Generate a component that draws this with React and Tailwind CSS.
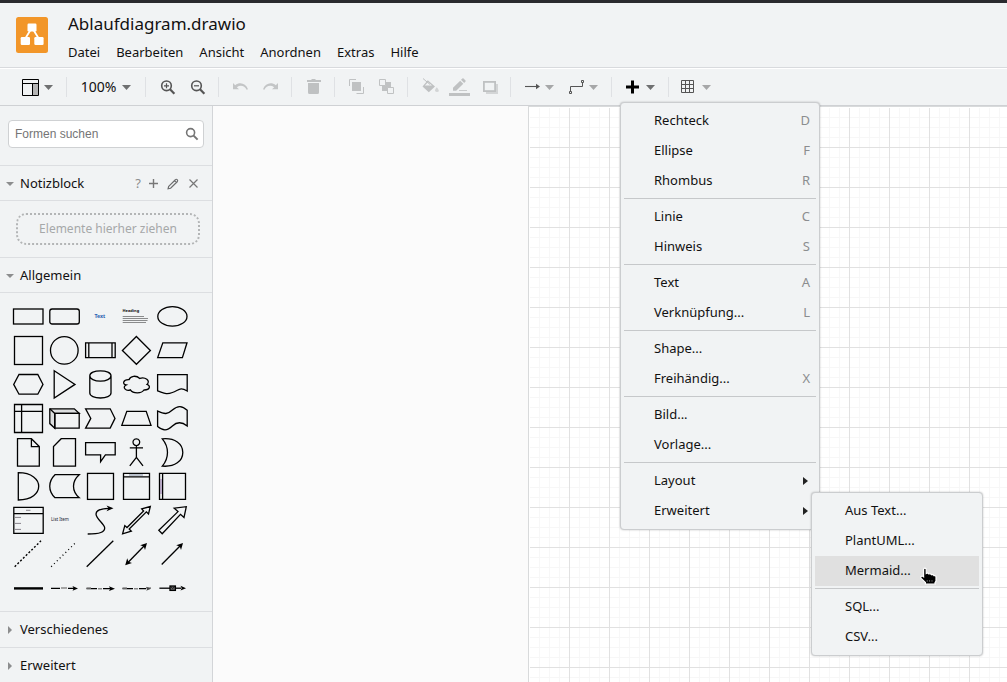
import React from 'react';

const menus = ['Datei', 'Bearbeiten', 'Ansicht', 'Anordnen', 'Extras', 'Hilfe'];

const insertMenu = [
    [
        { label: 'Rechteck', shortcut: 'D' },
        { label: 'Ellipse', shortcut: 'F' },
        { label: 'Rhombus', shortcut: 'R' },
    ],
    [
        { label: 'Linie', shortcut: 'C' },
        { label: 'Hinweis', shortcut: 'S' },
    ],
    [
        { label: 'Text', shortcut: 'A' },
        { label: 'Verknüpfung...', shortcut: 'L' },
    ],
    [
        { label: 'Shape...' },
        { label: 'Freihändig...', shortcut: 'X' },
    ],
    [
        { label: 'Bild...' },
        { label: 'Vorlage...' },
    ],
    [
        { label: 'Layout', submenu: true },
        { label: 'Erweitert', submenu: true, open: true },
    ],
];

const advancedMenu = [
    [
        { label: 'Aus Text...' },
        { label: 'PlantUML...' },
        { label: 'Mermaid...', active: true },
    ],
    [
        { label: 'SQL...' },
        { label: 'CSV...' },
    ],
];

// Sidebar shapes, each drawn in a 36x34 cell
const shapes = [
    { name: 'Rechteck', art: <rect x="3.5" y="10" width="29.5" height="15" /> },
    { name: 'Abgerundetes Rechteck', art: <rect x="3.8" y="10" width="29.5" height="15" rx="2.3" /> },
    { name: 'Text', art: <text x="12.4" y="19" fontSize="5.2" fontWeight="bold" fill="#2a5db0" stroke="none">Text</text> },
    {
        name: 'Textfeld',
        art: (
            <>
                <text x="4.5" y="13.2" fontSize="4" fontWeight="bold" fill="#111" stroke="none">Heading</text>
                <path d="M4.7 17.5H26M4.7 19.5H30M4.7 21.5H29.5M4.7 23.5H28" strokeWidth="0.6" stroke="#444" />
            </>
        ),
    },
    { name: 'Ellipse', art: <ellipse cx="18.4" cy="17.4" rx="14.6" ry="9.8" /> },
    { name: 'Quadrat', art: <rect x="4.5" y="3.5" width="28" height="28" /> },
    { name: 'Kreis', art: <circle cx="18.3" cy="17.4" r="13.8" /> },
    { name: 'Prozess', art: <path d="M3.6 9.8H33.2V24.6H3.6ZM6.8 9.8V24.6M30 9.8V24.6" /> },
    { name: 'Rhombus', art: <path d="M18.4 3.5L32.4 17.5L18.4 31.3L4.4 17.5Z" /> },
    { name: 'Parallelogramm', art: <path d="M8.8 9.8H33L28.4 24.6H3.7Z" /> },
    { name: 'Sechseck', art: <path d="M9 7.5H27.8L33 17.4L27.8 27.2H9L3.7 17.4Z" /> },
    { name: 'Dreieck', art: <path d="M8.2 3.8L29 17.4L8.2 31Z" /> },
    { name: 'Zylinder', art: <path d="M7.8 8.8C7.8 5.8 12.5 3.8 18.4 3.8S29 5.8 29 8.8V26C29 29 24.3 31 18.4 31S7.8 29 7.8 26ZM7.8 8.8C7.8 11.8 12.5 14.2 18.4 14.2S29 11.8 29 8.8" /> },
    { name: 'Wolke', art: <path d="M11 12.7C5 12.4 4 17.2 8.2 18C3.6 20 8 24.6 12.4 22.8C15 26.8 23.5 26.8 26 23C32 23.2 33 18.8 29 17.4C33 13.6 27 9.6 21.8 11.4C18.3 8.2 12.3 8.6 11 12.7Z" /> },
    { name: 'Dokument', art: <path d="M3.6 7.6H33.2V24C25.8 19.6 25.2 23 18.4 25.5C12 28 10 26 3.6 23.8Z" /> },
    { name: 'Interner Speicher', art: <path d="M4.5 3.5H32.5V31.5H4.5ZM4.5 10.4H32.5M11.6 3.5V31.5" /> },
    {
        name: 'Würfel',
        art: (
            <>
                <path d="M3.8 7.8H28.3L33.2 12.4H8.8V27.2L3.8 22.6Z" fill="#dcdedf" />
                <path d="M8.8 12.4H33.2V27.2H8.8ZM8.8 12.4L3.8 7.8" />
            </>
        ),
    },
    { name: 'Schritt', art: <path d="M3.6 7.8H28.2L33 17.4L28.2 27.1H3.6L8.8 17.4Z" /> },
    { name: 'Trapez', art: <path d="M8.8 10.3H28.2L33 24.4H3.8Z" /> },
    { name: 'Band', art: <path d="M3.6 10C11 13.6 13.5 13.4 18.4 9C24 4.2 28 4.6 33.2 9.3V25C28 20.8 23 20.6 18.4 25C13 30 9 30 3.6 25.5Z" /> },
    { name: 'Notiz', art: <path d="M7.5 3.7H21.4L29.3 11.6V31.2H7.5ZM21.4 3.7V11.6H29.3" /> },
    { name: 'Karte', art: <path d="M15.2 3.7H29.5V31.2H7.5V11.5Z" /> },
    { name: 'Sprechblase', art: <path d="M3.6 7.7H33.2V19.8H23.4L18.6 26.6V19.8H3.6Z" /> },
    { name: 'Akteur', art: <path d="M18.4 3.8A3.4 3.4 0 1 1 18.3 3.8ZM18.4 10.6V22.4M11.8 12.8H25M18.4 22.4L11.8 30.8M18.4 22.4L25 30.8" /> },
    { name: 'Oder', art: <path d="M8.3 3.8C21 2.6 28.8 9 28.8 17.4S21 32.2 8.3 31.1C15.2 23 15.2 12 8.3 3.8Z" /> },
    { name: 'Und', art: <path d="M8.3 3.7C35.5 3.7 35.5 31 8.3 31Z" /> },
    { name: 'Datenspeicher', art: <path d="M9 5.7H33.2C25.6 12.4 25.6 22 33.2 28.7H9C2 22 2 12.4 9 5.7Z" /> },
    { name: 'Container', art: <rect x="5.5" y="4.4" width="26" height="26" /> },
    {
        name: 'Vertikaler Container',
        art: (
            <>
                <path d="M5.5 4.4H31.5V30.4H5.5ZM5.5 7.8H31.5" />
                <path d="M11 6H25" strokeWidth="0.9" stroke="#76849a" />
            </>
        ),
    },
    {
        name: 'Horizontaler Container',
        art: (
            <>
                <path d="M5.5 4.4H31.5V30.4H5.5ZM8.6 4.4V30.4" />
                <path d="M7 10V25" strokeWidth="0.9" stroke="#8a67a5" />
            </>
        ),
    },
    {
        name: 'Liste',
        art: (
            <>
                <path d="M3.8 4.4H33.2V30.4H3.8ZM3.8 10.6H33.2" />
                <path d="M16 7.3H20.5M5 14.4H11M5 20.4H11M5 26.4H11" strokeWidth="0.8" stroke="#6b6470" />
            </>
        ),
    },
    { name: 'Listenelement', art: <text x="5" y="18" fontSize="4.4" fill="#223" stroke="none">List Item</text> },
    {
        name: 'Kurve',
        art: (
            <>
                <path d="M5.7 31C18 31 22.7 29 22.7 25C22.7 21 14 16 14 11C14 7 19 5.5 27 5.3" />
                <path d="M31.5 5.3L24.5 2.5L26.5 5.3L24.5 8.3Z" fill="black" stroke="none" />
            </>
        ),
    },
    { name: 'Doppelpfeil', art: <path d="M32.3 3.5L30.5 11L28.4 8.9L11.2 26L13.3 28.2L4.6 30.8L6.8 22.6L9 24.5L25.6 8L23.7 5.8Z" /> },
    { name: 'Pfeil', art: <path d="M32.3 3.7L30 14.5L26.5 11.3L8.2 30.8L4.8 27.3L24 8.6L20.2 5.2Z" /> },
    { name: 'Gestrichelte Linie', art: <path d="M4.7 29.7L31 3.8" strokeWidth="1.4" strokeDasharray="2 1.9" /> },
    { name: 'Gepunktete Linie', art: <path d="M5.2 29.7L30.5 4.8" strokeDasharray="1 3" /> },
    { name: 'Linie', art: <path d="M4.7 29.7L31.3 3.8" /> },
    {
        name: 'Bidirektionaler Verbinder',
        art: (
            <>
                <path d="M9 26.5L27 8" />
                <path d="M29 6L27 13L25.8 9.5L22.2 8.3ZM7.2 28.2L9.2 21.2L10.5 24.8L14 26Z" fill="black" stroke="none" />
            </>
        ),
    },
    {
        name: 'Gerichteter Verbinder',
        art: (
            <>
                <path d="M7.7 27.5L27 8" />
                <path d="M29 6L27 13L25.8 9.5L22.2 8.3Z" fill="black" stroke="none" />
            </>
        ),
    },
    { name: 'Verbindung', art: <path d="M4 17.4H33" strokeWidth="2.4" /> },
    {
        name: 'Verbinder mit Label',
        art: (
            <>
                <path d="M5 17.4H14M22 17.4H28" />
                <path d="M15 17H21" strokeWidth="1.5" stroke="#8a8a8a" />
                <path d="M32 17.4L26.5 15L27.7 17.4L26.5 19.8Z" fill="black" stroke="none" />
            </>
        ),
    },
    {
        name: 'Verbinder mit 2 Labels',
        art: (
            <>
                <path d="M4.5 17.7H15M21 17.7H29" />
                <path d="M4.5 17H9M16 17.7H20" strokeWidth="1.4" stroke="#888" />
                <path d="M33 17.7L27 15.3L28.2 17.7L27 20.1Z" fill="black" stroke="none" />
            </>
        ),
    },
    {
        name: 'Verbinder mit 3 Labels',
        art: (
            <>
                <path d="M4.5 17.7H15M21 17.7H28" />
                <path d="M4.5 17H9M16 17.7H20M28 17H33" strokeWidth="1.6" stroke="#888" />
                <path d="M33 17.7L28.2 15.7L29.2 17.7L28.2 19.7Z" fill="#444" stroke="none" />
            </>
        ),
    },
    {
        name: 'Verbinder mit Symbol',
        art: (
            <>
                <path d="M5.4 17.2H27" />
                <rect x="16" y="15" width="5.4" height="4.4" fill="#666" />
                <path d="M16.5 15.4L18.7 17.4L21 15.4" strokeWidth="0.8" />
                <path d="M32 17.2L26.5 14.8L27.7 17.2L26.5 19.6Z" fill="black" stroke="none" />
            </>
        ),
    },
];

const Caret = ({ strong }) => (
    <svg width="9" height="5" viewBox="0 0 9 5" className={strong ? 'text-[#6f7071]' : 'text-[#a6a7a8]'}>
        <path d="M0 0H9L4.5 5Z" fill="currentColor" />
    </svg>
);

const Separator = () => <div className="mx-1.5 h-5 w-px shrink-0 bg-[#dfe1e4]" />;

const ToolButton = ({ label, children }) => (
    <button type="button" aria-label={label} className="flex h-8 w-[30px] shrink-0 items-center justify-center">
        <svg width="24" height="24" viewBox="0 0 24 24" fill="none">{children}</svg>
    </button>
);

const DropButton = ({ label, strong, children }) => (
    <button type="button" aria-label={label} className="flex h-8 w-11 shrink-0 items-center gap-[5px] pl-1.5">
        {children}
        <Caret strong={strong} />
    </button>
);

const MenuSeparator = () => <hr className="mt-0.5 mb-[3px] h-px border-0 bg-[#c6c8ca]" />;

const MenuItem = ({ item }) => (
    <div className="relative">
        <button
            type="button"
            className={`flex h-[30px] w-full items-center justify-between pr-1.5 pl-[30px] text-left ${item.active ? 'bg-[#e0e0e0]' : ''}`}
        >
            <span>{item.label}</span>
            {item.shortcut && <span className="text-[#8b8d8f]">{item.shortcut}</span>}
            {item.submenu && (
                <svg width="5" height="8" viewBox="0 0 5 8" className="mr-0.5">
                    <path d="M0 0L5 4L0 8Z" fill="#222" />
                </svg>
            )}
        </button>
        {item.open && <Menu groups={advancedMenu} className="-top-1 left-[187px] w-[172px]" />}
        {item.active && (
            <svg width="18" height="20" viewBox="0 0 18 20" className="absolute top-[11px] left-[104px]">
                <path
                    d="M4.6 2.4C4.6 .8 7.2 .8 7.2 2.4V6.4C8.2 5.8 9.5 6 9.9 7C10.9 6.5 12.1 6.8 12.5 7.7C13.6 7.3 14.6 7.7 14.9 8.6C16.2 8.3 17 9 17 10.2V14L16 15.6V17.2H6.4V15.4L2.2 11.4C1.1 10.2 2.1 8.6 3.7 9.2L4.6 9.8Z"
                    fill="black"
                    stroke="white"
                    strokeWidth="1.2"
                />
                <path d="M8.2 13V14.8M10.6 13V14.8M13 13V14.8" stroke="#888" strokeWidth="0.7" />
            </svg>
        )}
    </div>
);

const Menu = ({ groups, className }) => (
    <div className={`absolute z-10 rounded border border-[#cbcdcf] bg-[#f1f3f4] p-[3px] text-[13px] text-[#111] shadow-[0_0_2px_rgba(0,0,0,0.25)] ${className}`}>
        {groups.map((group, index) => (
            <React.Fragment key={index}>
                {index > 0 && <MenuSeparator />}
                {group.map((item) => (
                    <MenuItem key={item.label} item={item} />
                ))}
            </React.Fragment>
        ))}
    </div>
);

const Header = () => (
    <header className="flex h-[65px] shrink-0 gap-5 border-b border-[#d8dadd] pl-4">
        <svg width="32" height="36" viewBox="0 0 32 36" className="mt-3.5">
            <rect width="32" height="36" rx="2.5" fill="#f29629" />
            <path d="M14.5 13L9 22M17.5 13L23 22" stroke="white" strokeWidth="1.8" />
            <rect x="11.5" y="6.5" width="9" height="8" rx="1.2" fill="white" />
            <rect x="4.7" y="20" width="9.3" height="8" rx="1.2" fill="white" />
            <rect x="18.3" y="20" width="9.3" height="8" rx="1.2" fill="white" />
        </svg>
        <div className="flex flex-col pt-2">
            <h1 className="text-[17px] leading-[26px]">Ablaufdiagram.drawio</h1>
            <nav className="flex gap-4 pt-[5px] text-[13px] leading-5">
                {menus.map((menu) => (
                    <button key={menu} type="button">{menu}</button>
                ))}
            </nav>
        </div>
    </header>
);

const Toolbar = () => (
    <div className="flex h-[38px] shrink-0 items-center border-t border-b border-t-white border-b-[#cfd1d4] pl-4">
        <DropButton label="Ansicht" strong>
            <svg width="17" height="17" viewBox="0 0 17 17" fill="none">
                <rect x="10" y="4" width="6" height="12" fill="#b5b5b5" />
                <path d="M.5 .5H16.5V16.5H.5ZM.5 4.5H16.5M10.5 4.5V16.5" stroke="black" />
            </svg>
        </DropButton>
        <Separator />
        <button type="button" className="flex h-8 w-[66px] shrink-0 items-center justify-center gap-1.5 text-sm">
            100%
            <Caret strong />
        </button>
        <Separator />
        <ToolButton label="Vergrößern">
            <circle cx="11.5" cy="10.8" r="4.8" stroke="#555" strokeWidth="1.6" />
            <path d="M15 14.3L19.4 18.7" stroke="#555" strokeWidth="2.2" />
            <path d="M9 10.8H14M11.5 8.3V13.3" stroke="#555" strokeWidth="1.2" />
        </ToolButton>
        <ToolButton label="Verkleinern">
            <circle cx="11.5" cy="10.8" r="4.8" stroke="#555" strokeWidth="1.6" />
            <path d="M15 14.3L19.4 18.7" stroke="#555" strokeWidth="2.2" />
            <path d="M9 10.8H14" stroke="#555" strokeWidth="1.2" />
        </ToolButton>
        <Separator />
        <ToolButton label="Rückgängig">
            <path d="M5 8V14.3H11L8.8 12.2C12.5 9.6 16.7 10.7 18.6 14.7L20 14.2C17.6 8.2 11.7 6.6 7.2 10.3Z" fill="#c3c5c6" />
        </ToolButton>
        <ToolButton label="Wiederherstellen">
            <path d="M20 8V14.3H14L16.2 12.2C12.5 9.6 8.3 10.7 6.4 14.7L5 14.2C7.4 8.2 13.3 6.6 17.8 10.3Z" fill="#c3c5c6" />
        </ToolButton>
        <Separator />
        <ToolButton label="Löschen">
            <path d="M6 5H10L11 4H14L15 5H20V7H6ZM7 8H18V17.5Q18 19 16.5 19H8.5Q7 19 7 17.5Z" fill="#bfc1c2" />
        </ToolButton>
        <Separator />
        <ToolButton label="Nach vorne">
            <path d="M8 7H17V16H8Z" fill="#c0c2c3" />
            <path d="M5.5 11V4.5H12M12.5 18.5H19.5V12" stroke="#c0c2c3" />
        </ToolButton>
        <ToolButton label="Nach hinten">
            <path d="M8 7H17V16H8Z" fill="#c0c2c3" />
            <path d="M5.5 4.5H11.5V10.5H5.5ZM13.5 12.5H19.5V18.5H13.5Z" fill="#f1f3f4" stroke="#c0c2c3" />
        </ToolButton>
        <Separator />
        <ToolButton label="Füllfarbe">
            <path d="M6 3.5L13 9.5" stroke="#bfc1c2" />
            <path d="M10.8 5.2L18 11.5L11.8 17.3L5.5 11.5ZM11 7.3L7.8 10.5H15Z" fill="#bfc1c2" fillRule="evenodd" />
            <path d="M19.8 12.3Q24 17 19.8 17Q16.2 16.5 19.8 12.3Z" fill="#d3d5d6" />
        </ToolButton>
        <ToolButton label="Linienfarbe">
            <path d="M6 15.8V12.8L13.2 5.7L16.3 8.7L9.2 15.8ZM14 4.8L15.4 3.4Q16 3 16.6 3.5L18.5 5.4Q19 6 18.5 6.5L17.2 7.9Z" fill="#bfc1c2" />
            <path d="M12 15.5H20" stroke="#c9cbcc" />
            <path d="M2 18H23V21H2Z" fill="#bfc1c2" />
        </ToolButton>
        <ToolButton label="Schatten">
            <path d="M9 9H21V19H9Z" fill="#d3d5d6" />
            <rect x="6.9" y="6.9" width="11.2" height="9.2" stroke="#bfc1c2" strokeWidth="1.8" fill="#f1f3f4" />
        </ToolButton>
        <Separator />
        <DropButton label="Verbindung">
            <svg width="17" height="16" viewBox="0 0 17 16" fill="none">
                <path d="M2 7.5H15" stroke="#555" strokeWidth="1.1" />
                <path d="M13 4.8L17 7.5L13 10.2Z" fill="#555" />
            </svg>
        </DropButton>
        <DropButton label="Wegpunkte">
            <svg width="17" height="16" viewBox="0 0 17 16" fill="none">
                <path d="M3.5 12V7.5H15.5V3.5M2.5 12.5H4.5V14.5H2.5ZM14.5 1.5H16.5V3.5H14.5Z" stroke="#555" />
            </svg>
        </DropButton>
        <Separator />
        <div className="relative">
            <DropButton label="Einfügen" strong>
                <svg width="17" height="14" viewBox="0 0 17 14">
                    <path d="M7 0.5H10V5.5H15V8.5H10V13.5H7V8.5H2V5.5H7Z" fill="black" />
                </svg>
            </DropButton>
            <Menu groups={insertMenu} className="top-[31px] left-0.5 w-[200px]" />
        </div>
        <Separator />
        <DropButton label="Tabelle">
            <svg width="16" height="14" viewBox="0 0 16 14" fill="none">
                <path d="M.5 .5H12.5V12.5H.5ZM4.5 .5V12.5M8.5 .5V12.5M.5 4.5H12.5M.5 8.5H12.5" stroke="#555" />
            </svg>
        </DropButton>
    </div>
);

const SectionHeader = ({ title, open, children }) => (
    <div className={`flex shrink-0 items-center justify-between border-t border-[#dcdee1] pt-px pr-3.5 pl-1.5 text-[13px] ${open ? 'h-[35px]' : 'h-9'}`}>
        <button type="button" className="flex items-center gap-1.5">
            <svg width="8" height="8" viewBox="0 0 8 8">
                <path d={open ? 'M0 2H8L4 6Z' : 'M2 0L6 4L2 8Z'} fill="#8c8d8e" />
            </svg>
            {title}
        </button>
        {children}
    </div>
);

const Sidebar = () => (
    <aside className="flex w-[213px] shrink-0 flex-col border-r border-[#d3d5d8]">
        <div className="h-[59px] shrink-0 px-2 pt-3.5">
            <label className="flex h-7 items-center rounded border border-[#cfd1d3] bg-white pr-1 pl-1.5">
                <input
                    type="text"
                    aria-label="Formen suchen"
                    placeholder="Formen suchen"
                    className="w-full min-w-0 font-['Liberation_Sans',Arial,sans-serif] text-xs text-[#555] outline-none placeholder:text-[#757575]"
                />
                <svg width="14" height="14" viewBox="0 0 14 14" fill="none" className="shrink-0">
                    <circle cx="5.6" cy="5.6" r="4" stroke="#757575" strokeWidth="1.6" />
                    <path d="M8.6 8.6L12.6 12.6" stroke="#757575" strokeWidth="2" />
                </svg>
            </label>
        </div>
        <SectionHeader title="Notizblock" open>
            <div className="flex items-center gap-2 text-[#8c8d8e]">
                <button type="button" aria-label="Hilfe">?</button>
                <button type="button" aria-label="Hinzufügen">
                    <svg width="9" height="9" viewBox="0 0 9 9"><path d="M0 4.5H9M4.5 0V9" stroke="#777" strokeWidth="1.4" /></svg>
                </button>
                <button type="button" aria-label="Bearbeiten">
                    <svg width="13" height="12" viewBox="0 0 13 12" fill="none">
                        <path d="M2.7 8.4L9.4 1.8Q10.3 .8 11.2 1.7T11.2 3.8L4.6 10.3L2.1 10.8ZM8.5 2.7L10.6 4.8" stroke="#6c6d6e" strokeWidth="1.2" />
                    </svg>
                </button>
                <button type="button" aria-label="Schließen" className="pl-0.5">
                    <svg width="9" height="9" viewBox="0 0 9 9"><path d="M.5 .5L8.5 8.5M8.5 .5L.5 8.5" stroke="#777" strokeWidth="1.2" /></svg>
                </button>
            </div>
        </SectionHeader>
        <div className="h-[57px] shrink-0 border-t border-[#dcdee1] px-4 pt-3 pr-3">
            <div className="flex h-8 items-center justify-center rounded-[10px] border-2 border-dotted border-[#b3b5b6] text-xs text-[#a6a8a9]">
                Elemente hierher ziehen
            </div>
        </div>
        <SectionHeader title="Allgemein" open />
        <div className="grid shrink-0 grid-cols-[repeat(5,36px)] border-t border-[#dcdee1] px-2.5 py-1.5">
            {shapes.map((shape) => (
                <button key={shape.name} type="button" aria-label={shape.name} className="h-[34px] w-9">
                    <svg width="36" height="34" viewBox="0 0 36 34" fill="none" stroke="black" strokeWidth="1.3">
                        {shape.art}
                    </svg>
                </button>
            ))}
        </div>
        <SectionHeader title="Verschiedenes" />
        <SectionHeader title="Erweitert" />
    </aside>
);

const App = () => (
    <div className="flex h-screen flex-col overflow-hidden border-t-3 border-[#2a2a2e] bg-[#f1f3f4] font-['Noto_Sans',sans-serif] text-[#111]">
        <Header />
        <Toolbar />
        <div className="flex min-h-0 flex-1">
            <Sidebar />
            <main className="flex min-w-0 flex-1 bg-[#fbfbfb] pl-[315px]">
                {/* Page with 10px grid and a stronger line every 40px */}
                <div className="flex flex-1 border-t border-l border-[#d8dadb] bg-white pt-px pl-px">
                    <div className="flex-1 bg-[linear-gradient(#e1e1e1_1px,transparent_1px),linear-gradient(90deg,#e1e1e1_1px,transparent_1px),linear-gradient(#f7f7f7_1px,transparent_1px),linear-gradient(90deg,#f7f7f7_1px,transparent_1px)] bg-[size:40px_40px,40px_40px,10px_10px,10px_10px] bg-[position:-1px_-1px]" />
                </div>
            </main>
        </div>
    </div>
);

export default App;
